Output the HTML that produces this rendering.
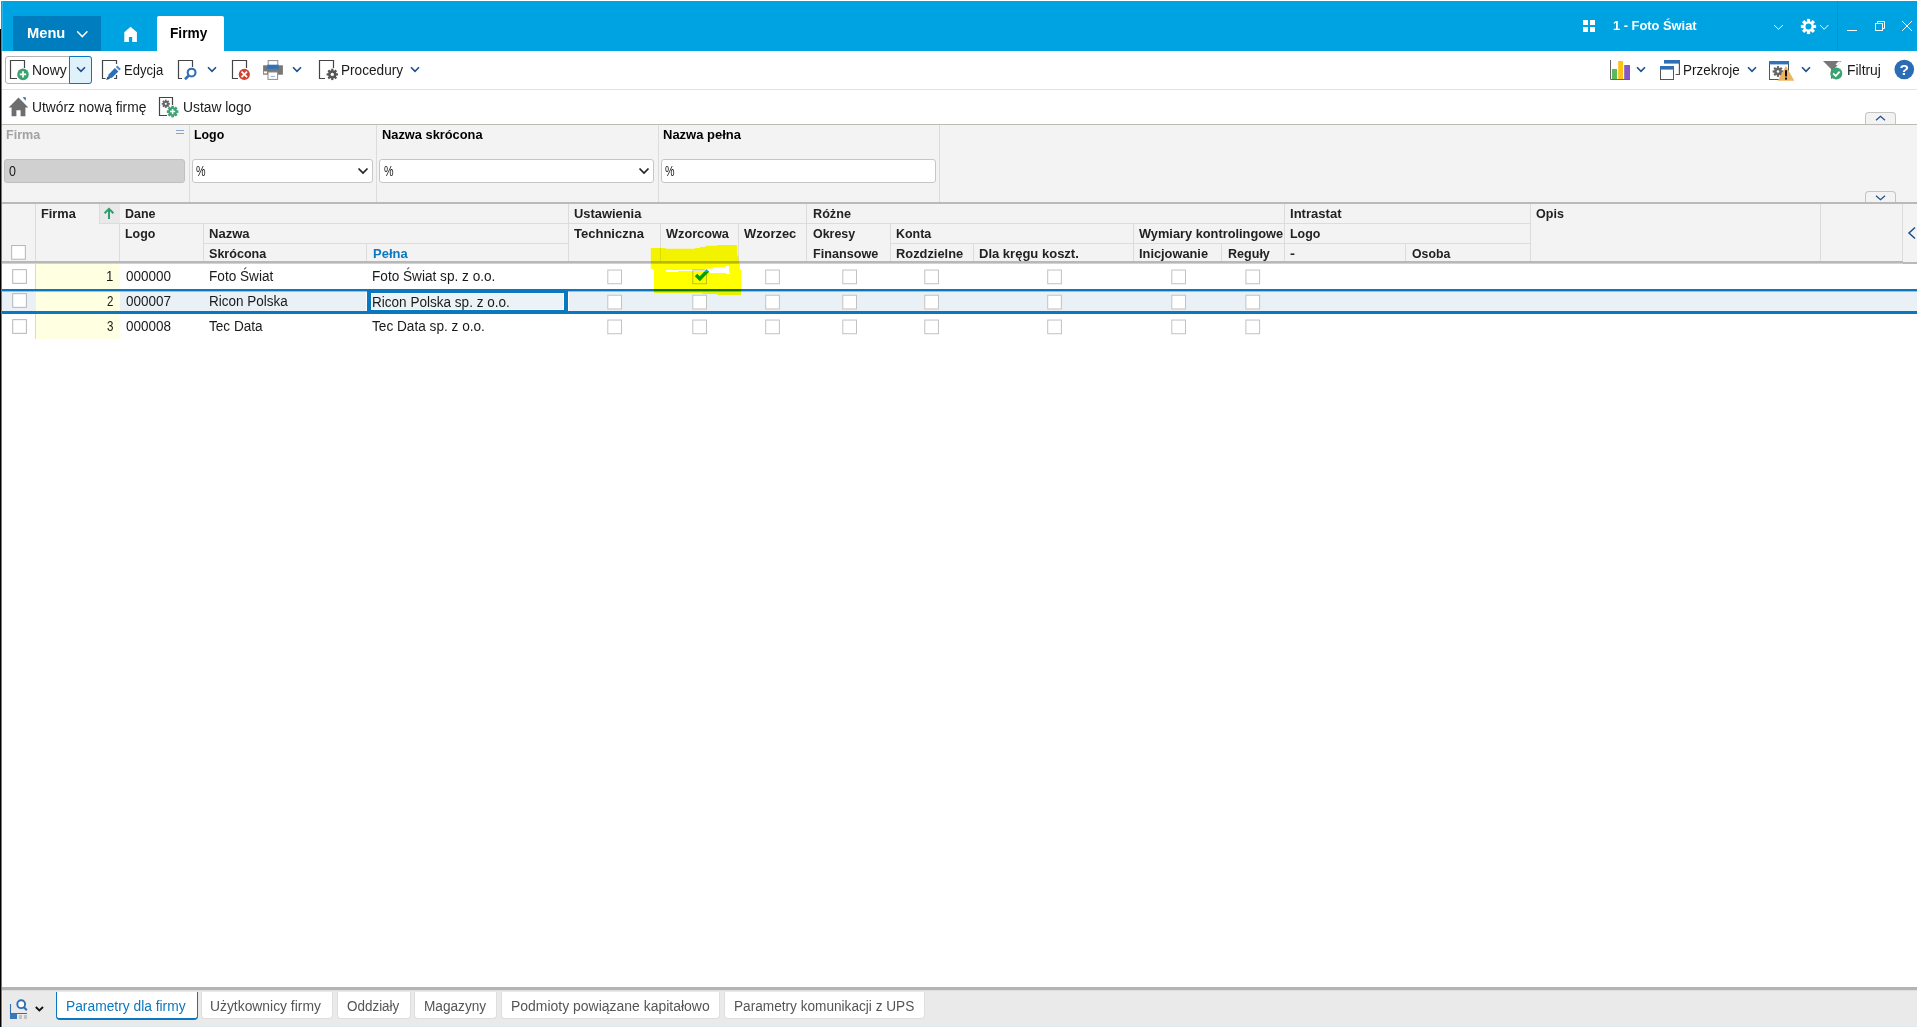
<!DOCTYPE html>
<html lang="pl">
<head>
<meta charset="utf-8">
<title>Firmy</title>
<style>
html,body{margin:0;padding:0;}
body{width:1917px;height:1027px;overflow:hidden;background:#fff;position:relative;font-family:"Liberation Sans",sans-serif;font-size:14px;color:#1a1a1a;}
#app{position:absolute;left:0;top:0;width:1917px;height:1027px;overflow:hidden;}
#app div,#app span,#app svg{position:absolute;}
.t{white-space:nowrap;line-height:16px;height:16px;transform-origin:0 50%;}
.hl{background:#dcdcdc;height:1px;}
.vl{background:#dcdcdc;width:1px;}
.cb{width:13px;height:13px;border:1px solid #c6c6c6;background:#fff;box-shadow:0 0 1px rgba(0,0,0,.12);}
.cs{width:12px;height:12px;}
.tab{top:992px;height:26px;border:1px solid #dedede;border-top:none;border-radius:0 0 4px 4px;background:#fff;}
</style>
</head>
<body>
<div id="app">
<div id="titlebar" style="left:0;top:0;width:1917px;height:51px;background:#00a3e2;"></div>
<!--title-->
<div style="left:0;top:0;width:1917px;height:1px;background:#6fc9ee;"></div>
<div id="menu" style="left:13px;top:16px;width:88px;height:35px;background:#007dbe;"></div>
<svg style="left:76px;top:29px;" width="14" height="10" viewBox="0 0 14 10"><path d="M1.6 2.8 L6.3 7.6 L11 2.8" fill="none" stroke="#fff" stroke-width="1.5" stroke-linecap="round"/></svg>
<svg style="left:123px;top:26px;" width="16" height="17" viewBox="0 0 16 17"><path d="M1.3 6.3 L7.5 0.8 L13.9 6.3 L13.9 16 L9.2 16 L9.2 11 L5.9 11 L5.9 16 L1.3 16 Z" fill="#fff"/></svg>
<div id="tabFirmy" style="left:157px;top:16px;width:67px;height:35px;background:#fff;border-radius:2px 2px 0 0;"></div>
<svg style="left:1583px;top:20px;" width="12" height="12" viewBox="0 0 12 12"><rect x="0" y="0" width="5" height="5" fill="#fff"/><rect x="7" y="0" width="5" height="5" fill="#fff"/><rect x="0" y="7" width="5" height="5" fill="#fff"/><rect x="7" y="7" width="5" height="5" fill="#fff"/></svg>
<svg style="left:1772px;top:23px;" width="13" height="8" viewBox="0 0 13 8"><path d="M2 2 L6.5 6.3 L11 2" fill="none" stroke="#fff" stroke-width="1"/></svg>
<svg id="gear" style="left:1800px;top:18px;" width="17" height="17" viewBox="-8.5 -8.5 17 17"><g fill="#fff"><circle r="5.3"/><rect x="-1.6" y="-7.6" width="3.2" height="15.2"/><rect x="-1.6" y="-7.6" width="3.2" height="15.2" transform="rotate(45)"/><rect x="-1.6" y="-7.6" width="3.2" height="15.2" transform="rotate(90)"/><rect x="-1.6" y="-7.6" width="3.2" height="15.2" transform="rotate(135)"/></g><circle r="3" fill="#00a3e2"/></svg>
<svg style="left:1818px;top:23px;" width="13" height="8" viewBox="0 0 13 8"><path d="M2 2 L6.2 6.3 L10.4 2" fill="none" stroke="#fff" stroke-width="1"/></svg>
<div style="left:1837px;top:1px;width:1px;height:50px;background:#0095d3;"></div>
<div style="left:1847px;top:30px;width:10px;height:1px;background:#fff;"></div>
<svg style="left:1874px;top:20px;" width="12" height="12" viewBox="0 0 12 12"><path d="M3.5 3.5 V1.5 H10.5 V8.5 H8.5" fill="none" stroke="#fff" stroke-width="1"/><rect x="1.5" y="3.5" width="7" height="7" fill="none" stroke="#fff" stroke-width="1"/></svg>
<svg style="left:1901px;top:20px;" width="12" height="12" viewBox="0 0 12 12"><path d="M1 1 L11 11 M11 1 L1 11" fill="none" stroke="#fff" stroke-width="1"/></svg>
<!--toolbar-->
<!-- toolbar row 1 -->
<div style="left:2px;top:89px;width:1915px;height:1px;background:#e2e2e2;"></div>
<div id="btnNowy" style="left:5px;top:56px;width:85px;height:26px;border:1px solid #b4b4b4;border-radius:3px;background:#fff;"></div>
<div id="btnNowyDd" style="left:69px;top:56px;width:21px;height:26px;border:1px solid #0a78be;border-radius:0 3px 3px 0;background:#dff1fa;"></div>
<svg style="left:9px;top:59px;" width="22" height="22" viewBox="0 0 22 22"><path d="M8 19.5 H1.5 V1.5 H15.5 V9" fill="none" stroke="#444" stroke-width="1.2"/><circle cx="14" cy="15.4" r="5.8" fill="#3aa371"/><path d="M14 12.2 V18.6 M10.8 15.4 H17.2" stroke="#fff" stroke-width="1.7" fill="none"/></svg>
<svg class="chev" style="left:76.2px;top:66px;" width="10" height="7" viewBox="0 0 10 7"><path d="M1 1.2 L5 5.4 L9 1.2" fill="none" stroke="#1f4e8c" stroke-width="1.6"/></svg>

<svg style="left:101px;top:59px;" width="22" height="22" viewBox="0 0 22 22"><path d="M4.5 19.5 H1.5 V1.5 H15.5 V5" fill="none" stroke="#444" stroke-width="1.2"/><path d="M15.5 16 V19.5 H13" fill="none" stroke="#444" stroke-width="1.2"/><path d="M6.6 19.6 L7.6 15.4 L13.9 9 L17.4 12.4 L11 18.8 Z" fill="#2f6db5"/><path d="M14.8 8 L16.2 6.6 L19.8 10 L18.4 11.4 Z" fill="#4a86c8"/><path d="M5.2 21 L6.6 17.6 L9 19.8 Z" fill="#1f4e8c"/></svg>

<svg style="left:177px;top:59px;" width="24" height="22" viewBox="0 0 24 22"><path d="M5 19.5 H1.5 V1.5 H15.5 V8" fill="none" stroke="#444" stroke-width="1.2"/><circle cx="14.6" cy="13.6" r="3.9" fill="#fff" stroke="#2f6db5" stroke-width="2.1"/><path d="M11.6 16.8 L8 20.2" stroke="#2f6db5" stroke-width="2.6" fill="none"/></svg>
<svg class="chev" style="left:206.5px;top:66px;" width="10" height="7" viewBox="0 0 10 7"><path d="M1 1.2 L5 5.4 L9 1.2" fill="none" stroke="#1f4e8c" stroke-width="1.6"/></svg>

<svg style="left:231px;top:59px;" width="22" height="22" viewBox="0 0 22 22"><path d="M7 19.5 H1.5 V1.5 H15.5 V9" fill="none" stroke="#444" stroke-width="1.2"/><circle cx="13.3" cy="15.4" r="5.6" fill="#d1432f"/><path d="M10.6 12.7 L16 18.1 M16 12.7 L10.6 18.1" stroke="#fff" stroke-width="1.8" fill="none"/></svg>

<svg style="left:262px;top:59px;" width="22" height="22" viewBox="0 0 22 22"><rect x="6.2" y="1.6" width="9.6" height="5" fill="#fff" stroke="#8a8a8a" stroke-width="1"/><rect x="1.1" y="6.3" width="19.8" height="9.4" fill="#777"/><rect x="5.2" y="5.7" width="11.4" height="4.2" fill="#2f74ba"/><rect x="1.9" y="12.4" width="3.2" height="2" fill="#fff"/><rect x="6" y="13" width="9.6" height="7.4" fill="#fff" stroke="#8a8a8a" stroke-width="1"/><rect x="8.6" y="16.9" width="4.4" height="1" fill="#8fb4dc"/></svg>
<svg class="chev" style="left:292.3px;top:66px;" width="10" height="7" viewBox="0 0 10 7"><path d="M1 1.2 L5 5.4 L9 1.2" fill="none" stroke="#1f4e8c" stroke-width="1.6"/></svg>

<svg style="left:318px;top:59px;" width="22" height="22" viewBox="0 0 22 22"><path d="M7 19.5 H1.5 V1.5 H15.5 V9" fill="none" stroke="#444" stroke-width="1.2"/><g transform="translate(14.3 15.4)" fill="#555"><circle r="4.1"/><rect x="-1.1" y="-5.7" width="2.2" height="11.4"/><rect x="-1.1" y="-5.7" width="2.2" height="11.4" transform="rotate(45)"/><rect x="-1.1" y="-5.7" width="2.2" height="11.4" transform="rotate(90)"/><rect x="-1.1" y="-5.7" width="2.2" height="11.4" transform="rotate(135)"/><circle r="1.7" fill="#fff"/></g></svg>
<svg class="chev" style="left:409.8px;top:66px;" width="10" height="7" viewBox="0 0 10 7"><path d="M1 1.2 L5 5.4 L9 1.2" fill="none" stroke="#1f4e8c" stroke-width="1.6"/></svg>

<!-- right side -->
<svg style="left:1609px;top:59px;" width="22" height="22" viewBox="0 0 22 22"><rect x="3" y="10" width="5" height="10" fill="#5cb85c"/><rect x="9.2" y="2" width="4.8" height="18" fill="#ffc20e"/><rect x="15.2" y="6" width="5.8" height="14" fill="#8558c4"/><path d="M1.5 1 V20.5 H21" fill="none" stroke="#666" stroke-width="1"/></svg>
<svg class="chev" style="left:1635.5px;top:66px;" width="10" height="7" viewBox="0 0 10 7"><path d="M1 1.2 L5 5.4 L9 1.2" fill="none" stroke="#1f4e8c" stroke-width="1.6"/></svg>
<svg style="left:1659px;top:59px;" width="22" height="22" viewBox="0 0 22 22"><rect x="5" y="1" width="16" height="3.6" fill="#2f6db5"/><path d="M20.4 4 V15.5 H16.5" fill="none" stroke="#555" stroke-width="1.2"/><rect x="1.5" y="7.5" width="13" height="13" fill="#fff" stroke="#555" stroke-width="1"/><rect x="1" y="7" width="14" height="3.6" fill="#2f6db5"/></svg>
<svg class="chev" style="left:1746.7px;top:66px;" width="10" height="7" viewBox="0 0 10 7"><path d="M1 1.2 L5 5.4 L9 1.2" fill="none" stroke="#1f4e8c" stroke-width="1.6"/></svg>
<svg style="left:1768px;top:60px;" width="28" height="22" viewBox="0 0 28 22"><rect x="1.5" y="1.5" width="19" height="18" fill="#fff" stroke="#555" stroke-width="1"/><rect x="1" y="1" width="20" height="3.4" fill="#2f74ba"/><g transform="translate(10 11.5)" fill="#666"><circle r="3.8"/><rect x="-1.1" y="-5.4" width="2.2" height="10.8"/><rect x="-1.1" y="-5.4" width="2.2" height="10.8" transform="rotate(45)"/><rect x="-1.1" y="-5.4" width="2.2" height="10.8" transform="rotate(90)"/><rect x="-1.1" y="-5.4" width="2.2" height="10.8" transform="rotate(135)"/><circle r="1.3" fill="#fff"/></g><path d="M18 6 L26.3 20.8 H9.7 Z" fill="#ecb661"/><rect x="17" y="10.2" width="2" height="6.2" fill="#111"/><rect x="17" y="17.6" width="2" height="2" fill="#111"/></svg>
<svg class="chev" style="left:1801.4px;top:66px;" width="10" height="7" viewBox="0 0 10 7"><path d="M1 1.2 L5 5.4 L9 1.2" fill="none" stroke="#1f4e8c" stroke-width="1.6"/></svg>
<svg style="left:1822px;top:60px;" width="22" height="22" viewBox="0 0 22 22"><path d="M1 1 H19.5 L12 9 V17.5 L9 19 V9 Z" fill="#777"/><path d="M13.5 4.6 L16.5 1.4 H19 L15.5 5.2 Z" fill="#fff"/><circle cx="14.3" cy="13.6" r="6" fill="#3aa371"/><path d="M11.2 13.4 L13.7 16 L17.6 11.6" fill="none" stroke="#fff" stroke-width="1.8"/></svg>
<svg style="left:1894px;top:59px;" width="21" height="21" viewBox="0 0 21 21"><circle cx="10.3" cy="10.5" r="9.8" fill="#2c6cb4"/><text x="10.3" y="16" text-anchor="middle" font-family="Liberation Sans, sans-serif" font-weight="bold" font-size="15.5" fill="#fff">?</text></svg>

<!-- toolbar row 2 -->
<svg style="left:8px;top:96px;" width="22" height="22" viewBox="0 0 22 22"><path d="M10.5 1.5 L20.3 11.6 H17.4 V20.3 H12.6 V14.2 H8.4 V20.3 H3.6 V11.6 H0.7 Z" fill="#6e6e6e"/><path d="M14.5 1.2 H17.8 V4.8 Z" fill="#2f6db5"/></svg>
<svg style="left:158px;top:96px;" width="22" height="22" viewBox="0 0 22 22"><path d="M9 19.5 H1.5 V1.5 H14.5 V9" fill="none" stroke="#444" stroke-width="1.2"/><g transform="translate(7.8 7.8)" fill="#666"><circle r="2.9"/><rect x="-0.9" y="-4.1" width="1.8" height="8.2"/><rect x="-0.9" y="-4.1" width="1.8" height="8.2" transform="rotate(45)"/><rect x="-0.9" y="-4.1" width="1.8" height="8.2" transform="rotate(90)"/><rect x="-0.9" y="-4.1" width="1.8" height="8.2" transform="rotate(135)"/><circle r="1.1" fill="#fff"/></g><g transform="translate(14.6 15.6)" fill="#3aa371"><circle r="4.3"/><rect x="-1.3" y="-5.8" width="2.6" height="11.6"/><rect x="-1.3" y="-5.8" width="2.6" height="11.6" transform="rotate(45)"/><rect x="-1.3" y="-5.8" width="2.6" height="11.6" transform="rotate(90)"/><rect x="-1.3" y="-5.8" width="2.6" height="11.6" transform="rotate(135)"/><path d="M0 -2.6 V2.6 M-2.6 0 H2.6" stroke="#fff" stroke-width="1.5"/></g></svg>
<!--filter-->
<div id="fpanel" style="left:2px;top:124px;width:1915px;height:78px;background:#f3f3f3;border-top:1px solid #bcbcb6;box-sizing:border-box;"></div>
<div style="left:1865px;top:112px;width:29px;height:11px;border:1px solid #c4c4c4;border-bottom:none;border-radius:4px 4px 0 0;background:#f3f3f3;"></div>
<svg style="left:1874px;top:114px;" width="13" height="8" viewBox="0 0 13 8"><path d="M2 6.3 L6.5 2.2 L11 6.3" fill="none" stroke="#1f4e8c" stroke-width="1.2"/></svg>
<div style="left:1865px;top:191px;width:29px;height:11px;border:1px solid #c4c4c4;border-bottom:none;border-radius:4px 4px 0 0;background:#f3f3f3;"></div>
<svg style="left:1874px;top:194px;" width="13" height="8" viewBox="0 0 13 8"><path d="M2 1.7 L6.5 5.8 L11 1.7" fill="none" stroke="#1f4e8c" stroke-width="1.2"/></svg>
<div class="vl" style="left:189px;top:125px;height:77px;"></div>
<div class="vl" style="left:376px;top:125px;height:77px;"></div>
<div class="vl" style="left:658px;top:125px;height:77px;"></div>
<div class="vl" style="left:939px;top:125px;height:77px;"></div>
<div style="left:176px;top:130px;width:8px;height:1.4px;background:#86a5cf;"></div>
<div style="left:176px;top:133px;width:8px;height:1.4px;background:#86a5cf;"></div>
<div style="left:4px;top:159px;width:179px;height:22px;border:1px solid #c0c0c0;border-radius:3px;background:#d0d0d0;"></div>
<div style="left:192px;top:159px;width:179px;height:22px;border:1px solid #c6c6c6;border-radius:3px;background:#fff;"></div>
<svg style="left:357px;top:167px;" width="12" height="8" viewBox="0 0 12 8"><path d="M1.5 1.5 L6 6 L10.5 1.5" fill="none" stroke="#222" stroke-width="1.7"/></svg>
<div style="left:379px;top:159px;width:273px;height:22px;border:1px solid #c6c6c6;border-radius:3px;background:#fff;"></div>
<svg style="left:638px;top:167px;" width="12" height="8" viewBox="0 0 12 8"><path d="M1.5 1.5 L6 6 L10.5 1.5" fill="none" stroke="#222" stroke-width="1.7"/></svg>
<div style="left:661px;top:159px;width:273px;height:22px;border:1px solid #c6c6c6;border-radius:3px;background:#fff;"></div>
<!--grid-->
<div id="ghead" style="left:2px;top:202px;width:1901px;height:61px;background:#f3f3f3;"></div>
<div style="left:1903px;top:202px;width:14px;height:62px;background:#f3f3f3;"></div>
<div style="left:2px;top:202px;width:1915px;height:2px;background:#b9b9b5;"></div>
<div style="left:36px;top:264px;width:84px;height:75px;background:#ffffe1;"></div>
<div style="left:35px;top:264px;width:1px;height:75px;background:#c9dcf3;"></div>
<div style="left:2px;top:291px;width:34px;height:20px;background:#e9f1f6;"></div>
<div style="left:120px;top:291px;width:1797px;height:20px;background:#e9f1f6;"></div>
<div style="left:2px;top:289px;width:1915px;height:2px;background:#0a78be;"></div>
<div style="left:2px;top:291px;width:1915px;height:1px;background:#8fc1e0;"></div>
<div style="left:2px;top:311px;width:1915px;height:3px;background:#0a78be;"></div>
<div style="left:366px;top:292px;width:1px;height:19px;background:#fff;"></div>
<div style="left:568px;top:292px;width:1px;height:19px;background:#fff;"></div>
<div style="left:367px;top:289px;width:193px;height:17px;border:4px solid #0a78be;background:#ecf3f7;box-shadow:inset 0 0 0 1px #fff;"></div>
<div class="vl" style="left:35px;top:204px;height:57px;"></div>
<div class="vl" style="left:119px;top:204px;height:57px;"></div>
<div class="vl" style="left:568px;top:204px;height:57px;"></div>
<div class="vl" style="left:806px;top:204px;height:57px;"></div>
<div class="vl" style="left:1284px;top:204px;height:57px;"></div>
<div class="vl" style="left:1530px;top:204px;height:57px;"></div>
<div class="vl" style="left:1820px;top:204px;height:57px;"></div>
<div class="vl" style="left:1902px;top:204px;height:57px;"></div>
<div class="vl" style="left:203px;top:224px;height:37px;"></div>
<div class="vl" style="left:660px;top:224px;height:37px;"></div>
<div class="vl" style="left:738px;top:224px;height:37px;"></div>
<div class="vl" style="left:890px;top:224px;height:37px;"></div>
<div class="vl" style="left:1133px;top:224px;height:37px;"></div>
<div class="vl" style="left:366px;top:244px;height:17px;"></div>
<div class="vl" style="left:973px;top:244px;height:17px;"></div>
<div class="vl" style="left:1221px;top:244px;height:17px;"></div>
<div class="vl" style="left:1405px;top:244px;height:17px;"></div>
<div class="hl" style="left:120px;top:223px;width:1410px;"></div>
<div class="hl" style="left:204px;top:243px;width:364px;"></div>
<div class="hl" style="left:891px;top:243px;width:639px;"></div>
<div style="left:99px;top:204px;width:20px;height:19px;background:#e9e9e9;border-left:1px solid #dcdcdc;border-bottom:1px solid #dcdcdc;box-sizing:content-box;"></div>
<svg style="left:103px;top:207px;" width="12" height="13" viewBox="0 0 12 13"><path d="M6 12 V2.4 M1.6 6.2 L6 1.8 L10.4 6.2" fill="none" stroke="#2f9e6b" stroke-width="2"/></svg>
<div style="left:2px;top:261px;width:1901px;height:2px;background:#b8b8b8;"></div>
<div style="left:2px;top:263px;width:1901px;height:1px;background:#d2d2d2;"></div>
<div style="left:1903px;top:262px;width:14px;height:2px;background:#b9b9b5;"></div>
<svg style="left:1906px;top:226px;" width="11" height="14" viewBox="0 0 11 14"><path d="M9 1.5 L3 7 L9 12.5" fill="none" stroke="#1f4e8c" stroke-width="1.5"/></svg>
<svg id="cbs" style="left:0;top:200px;" width="1300" height="140" viewBox="0 0 1300 140"><g fill="#fff" stroke="#c2c2c2" stroke-width="1"><rect x="11.65" y="45.55" width="13.7" height="13.7" stroke="#b6b6b6"/><rect x="12.70" y="69.65" width="13.7" height="13.7" stroke="#b6b6b6"/><rect x="12.70" y="93.65" width="13.7" height="13.7" stroke="#b6b6b6"/><rect x="12.70" y="119.65" width="13.7" height="13.7" stroke="#b6b6b6"/><rect x="607.80" y="70.05" width="13.7" height="13.7"/><rect x="692.80" y="70.05" width="13.7" height="13.7"/><rect x="765.70" y="70.05" width="13.7" height="13.7"/><rect x="842.80" y="70.05" width="13.7" height="13.7"/><rect x="924.75" y="70.05" width="13.7" height="13.7"/><rect x="1047.70" y="70.05" width="13.7" height="13.7"/><rect x="1171.80" y="70.05" width="13.7" height="13.7"/><rect x="1245.90" y="70.05" width="13.7" height="13.7"/><rect x="607.80" y="95.25" width="13.7" height="13.7"/><rect x="692.80" y="95.25" width="13.7" height="13.7"/><rect x="765.70" y="95.25" width="13.7" height="13.7"/><rect x="842.80" y="95.25" width="13.7" height="13.7"/><rect x="924.75" y="95.25" width="13.7" height="13.7"/><rect x="1047.70" y="95.25" width="13.7" height="13.7"/><rect x="1171.80" y="95.25" width="13.7" height="13.7"/><rect x="1245.90" y="95.25" width="13.7" height="13.7"/><rect x="607.80" y="120.05" width="13.7" height="13.7"/><rect x="692.80" y="120.05" width="13.7" height="13.7"/><rect x="765.70" y="120.05" width="13.7" height="13.7"/><rect x="842.80" y="120.05" width="13.7" height="13.7"/><rect x="924.75" y="120.05" width="13.7" height="13.7"/><rect x="1047.70" y="120.05" width="13.7" height="13.7"/><rect x="1171.80" y="120.05" width="13.7" height="13.7"/><rect x="1245.90" y="120.05" width="13.7" height="13.7"/></g></svg>
<svg id="chk" style="left:690px;top:264px;" width="24" height="22" viewBox="690 264 24 22"><path d="M694.8 276.3 L697.2 273.7 L699.8 276.3 L706.5 269.3 L709.4 271.6 L699.8 281.3 Z" fill="#00a0ff"/></svg>
<!--bottom-->
<div id="bbar" style="left:2px;top:987px;width:1915px;height:40px;background:#eaeaea;"></div>
<div style="left:2px;top:987px;width:1915px;height:3px;background:#b4b4b4;"></div>
<div style="left:2px;top:990px;width:1915px;height:1px;background:#dedede;"></div>
<div style="left:2px;top:1026px;width:1915px;height:1px;background:#dcebf2;"></div>
<div style="left:2px;top:991px;width:1px;height:35px;background:#fbf1ec;"></div>
<svg style="left:9px;top:998px;" width="20" height="22" viewBox="0 0 20 22"><path d="M1.5 6 V20.5" stroke="#2f6db5" stroke-width="1.1" fill="none"/><path d="M1 15.5 H18" stroke="#2f6db5" stroke-width="1" fill="none"/><rect x="1" y="15.5" width="7" height="5.5" fill="#3b78b8"/><rect x="10" y="17" width="3" height="4" fill="#c2c2c2"/><rect x="15" y="17" width="3" height="4" fill="#c2c2c2"/><circle cx="12.2" cy="6.2" r="3.9" fill="#fff" stroke="#2f6db5" stroke-width="1.9"/><path d="M15 9.2 L17.8 12.2" stroke="#2f6db5" stroke-width="2" fill="none"/></svg>
<svg style="left:34px;top:1005px;" width="11" height="8" viewBox="0 0 11 8"><path d="M1.8 2 L5.4 5.5 L9 2" fill="none" stroke="#111" stroke-width="1.8"/></svg>
<div id="tabActive" style="left:56px;top:992px;width:140px;height:26px;border:1px solid #0a78be;border-top:none;border-bottom-width:2px;border-radius:0 0 4px 4px;background:#fff;"></div>
<div class="tab" style="left:201px;width:130px;"></div>
<div class="tab" style="left:337px;width:72px;"></div>
<div class="tab" style="left:414px;width:81px;"></div>
<div class="tab" style="left:501px;width:217px;"></div>
<div class="tab" style="left:724px;width:199px;"></div>
<!--texts-->
<span id="menu" class="t" style="left:26.92px;top:24.5px;font-weight:bold;font-size:15px;color:#fff;transform:scaleX(0.9789);">Menu</span>
<span id="firmy" class="t" style="left:169.79px;top:24.5px;font-weight:bold;font-size:15px;color:#000;transform:scaleX(0.9135);">Firmy</span>
<span id="comp" class="t" style="left:1613.00px;top:17.5px;font-weight:bold;font-size:13px;color:#fff;transform:scaleX(0.9898);">1 - Foto Świat</span>
<span id="nowy" class="t" style="left:32.01px;top:62.0px;font-size:14px;color:#1a1a1a;transform:scaleX(0.9939);">Nowy</span>
<span id="edycja" class="t" style="left:124.07px;top:62.0px;font-size:14px;color:#1a1a1a;transform:scaleX(0.9337);">Edycja</span>
<span id="proc" class="t" style="left:341.33px;top:62.0px;font-size:14px;color:#1a1a1a;transform:scaleX(0.9728);">Procedury</span>
<span id="przek" class="t" style="left:1683.24px;top:62.0px;font-size:14px;color:#1a1a1a;transform:scaleX(0.9598);">Przekroje</span>
<span id="filtruj" class="t" style="left:1846.61px;top:62.0px;font-size:14px;color:#1a1a1a;transform:scaleX(0.9906);">Filtruj</span>
<span id="utworz" class="t" style="left:31.81px;top:99.0px;font-size:14px;color:#1a1a1a;transform:scaleX(0.9867);">Utwórz nową firmę</span>
<span id="ustaw" class="t" style="left:182.51px;top:99.0px;font-size:14px;color:#1a1a1a;transform:scaleX(0.9873);">Ustaw logo</span>
<span id="f_firma" class="t" style="left:6.30px;top:126.5px;font-weight:bold;font-size:13.5px;color:#a2a2a2;transform:scaleX(0.9314);">Firma</span>
<span id="f_logo" class="t" style="left:193.70px;top:126.5px;font-weight:bold;font-size:13.5px;color:#000;transform:scaleX(0.9163);">Logo</span>
<span id="f_nskr" class="t" style="left:381.70px;top:126.5px;font-weight:bold;font-size:13.5px;color:#000;transform:scaleX(0.9503);">Nazwa skrócona</span>
<span id="f_npel" class="t" style="left:662.70px;top:126.5px;font-weight:bold;font-size:13.5px;color:#000;transform:scaleX(0.9630);">Nazwa pełna</span>
<span id="f_0" class="t" style="left:8.50px;top:163.0px;font-size:14px;color:#1a1a1a;transform:scaleX(0.8875);">0</span>
<span id="f_p1" class="t" style="left:196.30px;top:163.0px;font-size:14px;color:#1a1a1a;transform:scaleX(0.7667);">%</span>
<span id="f_p2" class="t" style="left:384.10px;top:163.0px;font-size:14px;color:#1a1a1a;transform:scaleX(0.7667);">%</span>
<span id="f_p3" class="t" style="left:665.40px;top:163.0px;font-size:14px;color:#1a1a1a;transform:scaleX(0.7667);">%</span>
<span id="h0" class="t" style="left:40.90px;top:205.5px;font-weight:bold;font-size:13.5px;color:#222;transform:scaleX(0.9475);">Firma</span>
<span id="h1" class="t" style="left:125.10px;top:205.5px;font-weight:bold;font-size:13.5px;color:#222;transform:scaleX(0.9223);">Dane</span>
<span id="h2" class="t" style="left:125.10px;top:225.5px;font-weight:bold;font-size:13.5px;color:#222;transform:scaleX(0.9194);">Logo</span>
<span id="h3" class="t" style="left:208.90px;top:225.5px;font-weight:bold;font-size:13.5px;color:#222;transform:scaleX(0.9645);">Nazwa</span>
<span id="h4" class="t" style="left:208.90px;top:245.5px;font-weight:bold;font-size:13.5px;color:#222;transform:scaleX(0.9304);">Skrócona</span>
<span id="h5" class="t" style="left:573.60px;top:205.5px;font-weight:bold;font-size:13.5px;color:#222;transform:scaleX(0.9547);">Ustawienia</span>
<span id="h6" class="t" style="left:573.60px;top:225.5px;font-weight:bold;font-size:13.5px;color:#222;transform:scaleX(0.9643);">Techniczna</span>
<span id="h7" class="t" style="left:666.40px;top:225.5px;font-weight:bold;font-size:13.5px;color:#222;transform:scaleX(0.9428);">Wzorcowa</span>
<span id="h8" class="t" style="left:743.90px;top:225.5px;font-weight:bold;font-size:13.5px;color:#222;transform:scaleX(0.9538);">Wzorzec</span>
<span id="h9" class="t" style="left:812.50px;top:205.5px;font-weight:bold;font-size:13.5px;color:#222;transform:scaleX(0.9368);">Różne</span>
<span id="h10" class="t" style="left:812.50px;top:225.5px;font-weight:bold;font-size:13.5px;color:#222;transform:scaleX(0.9205);">Okresy</span>
<span id="h11" class="t" style="left:812.50px;top:245.5px;font-weight:bold;font-size:13.5px;color:#222;transform:scaleX(0.9352);">Finansowe</span>
<span id="h12" class="t" style="left:896.20px;top:225.5px;font-weight:bold;font-size:13.5px;color:#222;transform:scaleX(0.9216);">Konta</span>
<span id="h13" class="t" style="left:896.20px;top:245.5px;font-weight:bold;font-size:13.5px;color:#222;transform:scaleX(0.9521);">Rozdzielne</span>
<span id="h14" class="t" style="left:978.70px;top:245.5px;font-weight:bold;font-size:13.5px;color:#222;transform:scaleX(0.9642);">Dla kręgu koszt.</span>
<span id="h15" class="t" style="left:1138.80px;top:225.5px;font-weight:bold;font-size:13.5px;color:#222;transform:scaleX(0.9481);">Wymiary kontrolingowe</span>
<span id="h16" class="t" style="left:1138.80px;top:245.5px;font-weight:bold;font-size:13.5px;color:#222;transform:scaleX(0.9487);">Inicjowanie</span>
<span id="h17" class="t" style="left:1227.50px;top:245.5px;font-weight:bold;font-size:13.5px;color:#222;transform:scaleX(0.9297);">Reguły</span>
<span id="h18" class="t" style="left:1290.10px;top:205.5px;font-weight:bold;font-size:13.5px;color:#222;transform:scaleX(0.9672);">Intrastat</span>
<span id="h19" class="t" style="left:1290.10px;top:225.5px;font-weight:bold;font-size:13.5px;color:#222;transform:scaleX(0.9194);">Logo</span>
<span id="h20" class="t" style="left:1290.10px;top:245.5px;font-weight:bold;font-size:13.5px;color:#222;transform:scaleX(1.1000);">-</span>
<span id="h21" class="t" style="left:1411.50px;top:245.5px;font-weight:bold;font-size:13.5px;color:#222;transform:scaleX(0.9106);">Osoba</span>
<span id="h22" class="t" style="left:1536.20px;top:205.5px;font-weight:bold;font-size:13.5px;color:#222;transform:scaleX(0.9289);">Opis</span>
<span id="h_pelna" class="t" style="left:372.50px;top:245.5px;font-weight:bold;font-size:13.5px;color:#0a78be;transform:scaleX(0.9614);">Pełna</span>
<span id="r0n" class="t" style="left:106.06px;top:268.0px;font-size:14px;color:#1a1a1a;transform:scaleX(0.9429);">1</span>
<span id="r0l" class="t" style="left:125.60px;top:268.0px;font-size:14px;color:#1a1a1a;transform:scaleX(0.9653);">000000</span>
<span id="r0s" class="t" style="left:208.73px;top:268.0px;font-size:14px;color:#1a1a1a;transform:scaleX(0.9717);">Foto Świat</span>
<span id="r0p" class="t" style="left:371.83px;top:268.0px;font-size:14px;color:#1a1a1a;transform:scaleX(0.9724);">Foto Świat sp. z o.o.</span>
<span id="r1n" class="t" style="left:107.00px;top:293.0px;font-size:14px;color:#1a1a1a;transform:scaleX(0.8250);">2</span>
<span id="r1l" class="t" style="left:125.60px;top:293.0px;font-size:14px;color:#1a1a1a;transform:scaleX(0.9653);">000007</span>
<span id="r1s" class="t" style="left:208.74px;top:293.0px;font-size:14px;color:#1a1a1a;transform:scaleX(0.9627);">Ricon Polska</span>
<span id="r1p" class="t" style="left:371.83px;top:294.0px;font-size:14px;color:#1a1a1a;transform:scaleX(0.9679);">Ricon Polska sp. z o.o.</span>
<span id="r2n" class="t" style="left:107.00px;top:318.0px;font-size:14px;color:#1a1a1a;transform:scaleX(0.8250);">3</span>
<span id="r2l" class="t" style="left:125.60px;top:318.0px;font-size:14px;color:#1a1a1a;transform:scaleX(0.9653);">000008</span>
<span id="r2s" class="t" style="left:208.70px;top:318.0px;font-size:14px;color:#1a1a1a;transform:scaleX(0.9718);">Tec Data</span>
<span id="r2p" class="t" style="left:371.80px;top:318.0px;font-size:14px;color:#1a1a1a;transform:scaleX(0.9735);">Tec Data sp. z o.o.</span>
<span id="t1" class="t" style="left:66.31px;top:998.0px;font-size:14px;color:#0a78be;transform:scaleX(0.9854);">Parametry dla firmy</span>
<span id="t2" class="t" style="left:210.21px;top:998.0px;font-size:14px;color:#555;transform:scaleX(0.9900);">Użytkownicy firmy</span>
<span id="t3" class="t" style="left:347.30px;top:998.0px;font-size:14px;color:#555;transform:scaleX(0.9602);">Oddziały</span>
<span id="t4" class="t" style="left:424.43px;top:998.0px;font-size:14px;color:#555;transform:scaleX(0.9744);">Magazyny</span>
<span id="t5" class="t" style="left:511.20px;top:998.0px;font-size:14px;color:#555;transform:scaleX(0.9973);">Podmioty powiązane kapitałowo</span>
<span id="t6" class="t" style="left:734.33px;top:998.0px;font-size:14px;color:#555;transform:scaleX(0.9737);">Parametry komunikacji z UPS</span>
<!--marker-->
<svg id="marker" style="left:640px;top:240px;mix-blend-mode:multiply;" width="110" height="60" viewBox="640 240 110 60"><path fill-rule="evenodd" d="M650.8 247.9 L665.7 247.9 L666.0 248.8 L694.9 248.8 L695.2 247.9 L699.9 247.9 L700.2 247.0 L705.2 246.9 L705.5 245.8 L716.8 245.8 L717.1 245.0 L737.0 245.0 L737.3 255.8 L738.2 256.1 L738.5 261.0 L739.0 261.3 L739.2 263.7 L739.9 263.9 L740.1 269.8 L741.0 270.1 L741.0 294.9 L718.0 294.9 L717.7 294.0 L702.2 293.9 L702.0 293.0 L697.0 292.9 L686.2 292.9 L685.9 293.0 L654.1 293.0 L653.9 270.1 L652.9 269.8 L652.6 268.9 L650.8 268.7 Z M666.0 270.1 L703.5 270.1 L706.0 268.7 L713.0 268.6 L713.2 267.0 L725.0 267.0 L725.2 266.0 L729.1 266.0 L729.1 273.0 L730.0 273.1 L730.0 273.9 L726.0 273.9 L726.0 273.0 L710.0 273.0 L709.5 272.0 L704.0 272.0 L703.5 271.0 L678.0 271.0 L678.0 272.0 L666.0 272.0 Z" fill="#ffff00"/></svg>
<!--edge-->
<div style="left:0;top:0;width:1px;height:29px;background:#fff;"></div>
<div style="left:0;top:0;width:1917px;height:1px;background:#fff;"></div>
<div style="left:0;top:29px;width:1px;height:998px;background:#000;"></div>
<div style="left:1px;top:1px;width:1px;height:1026px;background:#00a2e1;"></div>
<div style="left:2px;top:1px;width:1px;height:50px;background:#2db4e8;"></div>
</div>
</body>
</html>
